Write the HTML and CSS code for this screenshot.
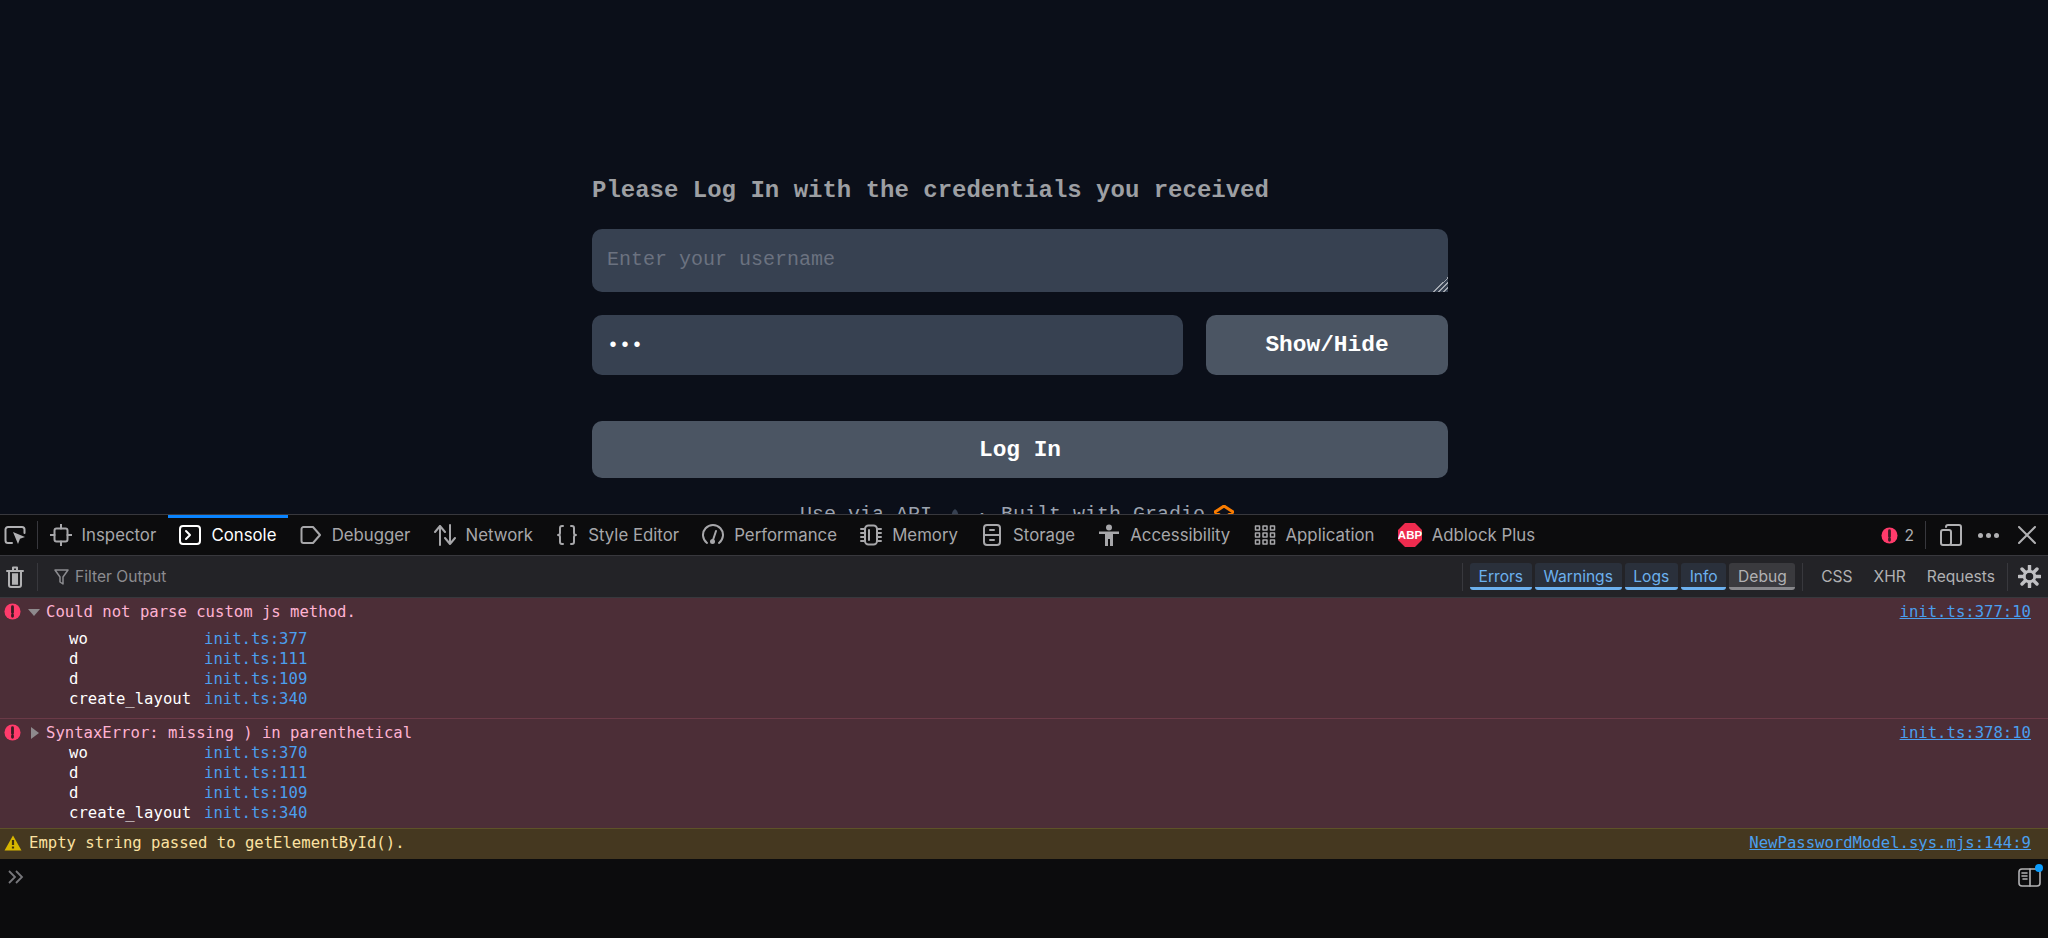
FILE: index.html
```html
<!DOCTYPE html>
<html lang="en">
<head>
<meta charset="utf-8">
<title>Log In</title>
<link rel="stylesheet" href="styles.css">
</head>
<body>
<main class="page">
  <form class="login">
    <h2 class="login-title">Please Log In with the credentials you received</h2>
    <textarea class="username" placeholder="Enter your username"></textarea>
    <div class="pass-row">
      <input class="password" type="password" value="abc">
      <button class="btn toggle" type="button">Show/Hide</button>
    </div>
    <button class="btn submit" type="button">Log In</button>
    <footer class="foot">
      <span>Use via API</span>
      <svg class="rocket" viewBox="0 0 12 12"><path d="M6 0c3 2 4 5 3 12H3C2 5 3 2 6 0z"/></svg>
      <span class="foot-dot">·</span>
      <span>Built with Gradio</span>
      <svg class="gradio" viewBox="0 0 20 20"><path d="M10 1l9 6-9 6-9-6z" fill="none" stroke="#f97c00" stroke-width="3"/></svg>
    </footer>
  </form>
</main>
<section class="devtools">
  <nav class="tabs">
    <button class="pick"><svg class="ic" viewBox="0 0 22 22"><path d="M8 19H4a2.500 2.500 0 0 1-2.500-2.500v-11A2.500 2.500 0 0 1 4 3h14a2.500 2.500 0 0 1 2.500 2.500V9"/><path class="fill" d="M9 8l12 5-5 1.800L14 20z"/></svg></button>
    <span class="sep"></span>
    <a class="tab"><svg class="ic" viewBox="0 0 22 22"><rect x="4.500" y="4.500" width="13" height="13" rx="2"/><path d="M11 0v4.500M11 17.500V22M0 11h4.500M17.500 11H22"/></svg>Inspector</a>
    <a class="tab active"><svg class="ic" viewBox="0 0 22 22"><rect x="1" y="2" width="20" height="18" rx="3"/><path d="M7 7l4 4-4 4"/></svg>Console</a>
    <a class="tab"><svg class="ic" viewBox="0 0 22 22"><path d="M3.500 3h9.500l7 8-7 8H3.500A2 2 0 0 1 1.500 17V5a2 2 0 0 1 2-2z"/></svg>Debugger</a>
    <a class="tab"><svg class="ic" viewBox="0 0 22 22"><path d="M6 21V2M1 8l5-6 5 6M16 1v19M11 14l5 6 5-6"/></svg>Network</a>
    <a class="tab"><svg class="ic" viewBox="0 0 22 22"><path d="M7 2H6a2 2 0 0 0-2 2v5a2 2 0 0 1-2 2 2 2 0 0 1 2 2v5a2 2 0 0 0 2 2h1M15 2h1a2 2 0 0 1 2 2v5a2 2 0 0 0 2 2 2 2 0 0 0-2 2v5a2 2 0 0 1-2 2h-1"/></svg>Style Editor</a>
    <a class="tab"><svg class="ic" viewBox="0 0 22 22"><path d="M5 19A10 10 0 1 1 17 19"/><path d="M14 7l-3 9"/><circle class="fill" cx="10.500" cy="17.500" r="2.500"/></svg>Performance</a>
    <a class="tab"><svg class="ic" viewBox="0 0 22 22"><rect x="5" y="1.500" width="12" height="19" rx="3.500"/><path d="M1 5h4M1 9h4M1 13h4M1 17h4M17 5h4M17 9h4M17 13h4M17 17h4M9 6v10"/></svg>Memory</a>
    <a class="tab"><svg class="ic" viewBox="0 0 22 22"><rect x="3" y="1" width="16" height="20" rx="3"/><path d="M3 11h16M9 6h4M9 16h4"/></svg>Storage</a>
    <a class="tab"><svg class="ic" viewBox="0 0 22 22"><circle class="fill" cx="11" cy="3.500" r="3"/><path class="fill" d="M1 7.500h20v2.500h-6v12h-3v-7h-2v7H7V10H1z"/></svg>Accessibility</a>
    <a class="tab"><svg class="ic thin" viewBox="0 0 22 22"><path d="M1.500 2h4v4h-4zM9 2h4v4H9zM16.500 2h4v4h-4zM1.500 9h4v4h-4zM9 9h4v4H9zM16.500 9h4v4h-4zM1.500 16h4v4h-4zM9 16h4v4H9zM16.500 16h4v4h-4z"/></svg>Application</a>
    <a class="tab"><svg class="ic abp" viewBox="0 0 24 24"><path class="abp-bg" d="M7 0h10l7 7v10l-7 7H7l-7-7V7z"/><text class="abp-text" x="12" y="16">ABP</text></svg>Adblock Plus</a>
    <div class="tabs-end">
      <span class="err-count"><svg class="bang" viewBox="0 0 18 18"><circle class="bang-bg" cx="9" cy="9" r="8.500"/><path class="bang-mark" d="M9 4v6M9 12.500v1.500"/></svg>2</span>
      <span class="sep"></span>
      <svg class="ic side" viewBox="0 0 22 22"><path d="M6 3a2 2 0 0 1 2-2h11a2 2 0 0 1 2 2v16a2 2 0 0 1-2 2h-8"/><rect x="1" y="6" width="10" height="15" rx="2"/></svg>
      <span class="dots"><i></i><i></i><i></i></span>
      <svg class="ic close" viewBox="0 0 18 18"><path d="M1 1l16 16M17 1L1 17"/></svg>
    </div>
  </nav>
  <div class="toolbar">
    <svg class="ic trash" viewBox="0 0 18 22"><path d="M1 5h16M7 4V1.500h4V4M3 5v14a2 2 0 0 0 2 2h8a2 2 0 0 0 2-2V5M7 8v10M9 8v10M11 8v10"/></svg>
    <span class="sep tool-sep"></span>
    <svg class="funnel" viewBox="0 0 15 16"><path d="M1 1h13L9 8v7l-3-2V8z"/></svg>
    <span class="filter">Filter Output</span>
    <div class="tool-end">
      <span class="sep"></span>
      <div class="levels">
        <button class="level">Errors</button>
        <button class="level">Warnings</button>
        <button class="level">Logs</button>
        <button class="level">Info</button>
        <button class="level off">Debug</button>
      </div>
      <span class="sep"></span>
      <div class="kinds"><span>CSS</span><span>XHR</span><span>Requests</span></div>
      <span class="sep"></span>
      <svg class="ic gear" viewBox="0 0 24 24"><circle cx="12" cy="12" r="5.500"/><path class="spokes" d="M12 1v5M12 18v5M1 12h5M18 12h5M4.200 4.200l3.600 3.600M16.200 16.200l3.600 3.600M19.800 4.200l-3.600 3.600M7.800 16.200l-3.600 3.600"/></svg>
    </div>
  </div>
  <div class="log">
    <article class="msg err first">
      <svg class="bang" viewBox="0 0 18 18"><circle class="bang-bg" cx="9" cy="9" r="8.500"/><path class="bang-mark" d="M9 4v6M9 12.500v1.500"/></svg>
      <span class="arrow open"></span>
      <span class="text">Could not parse custom js method.</span>
      <a class="src">init.ts:377:10</a>
      <ul class="stack">
        <li><span>wo</span><a>init.ts:377</a></li>
        <li><span>d</span><a>init.ts:111</a></li>
        <li><span>d</span><a>init.ts:109</a></li>
        <li><span>create_layout</span><a>init.ts:340</a></li>
      </ul>
    </article>
    <article class="msg err second">
      <svg class="bang" viewBox="0 0 18 18"><circle class="bang-bg" cx="9" cy="9" r="8.500"/><path class="bang-mark" d="M9 4v6M9 12.500v1.500"/></svg>
      <span class="arrow shut"></span>
      <span class="text">SyntaxError: missing ) in parenthetical</span>
      <a class="src">init.ts:378:10</a>
      <ul class="stack tight">
        <li><span>wo</span><a>init.ts:370</a></li>
        <li><span>d</span><a>init.ts:111</a></li>
        <li><span>d</span><a>init.ts:109</a></li>
        <li><span>create_layout</span><a>init.ts:340</a></li>
      </ul>
    </article>
    <article class="msg warn">
      <svg class="tri" viewBox="0 0 18 16"><path class="tri-bg" d="M9 .5l8.500 15H.5z"/><path class="tri-mark" d="M9 5v5M9 11.500v2"/></svg>
      <span class="text">Empty string passed to getElementById().</span>
      <a class="src">NewPasswordModel.sys.mjs:144:9</a>
    </article>
    <div class="prompt">
      <svg class="chev" viewBox="0 0 16 14"><path d="M1 1l6 6-6 6M8 1l6 6-6 6"/></svg>
      <span class="side-wrap">
        <svg class="ic book" viewBox="0 0 23 20"><rect x="1" y="2" width="21" height="17" rx="3"/><path d="M12 2v17M4 6h5M4 9h5M5 12h4"/></svg>
        <i class="ping"></i>
      </span>
    </div>
  </div>
</section>
</body>
</html>
```

FILE: styles.css
```css
* { box-sizing: border-box; }
html, body { margin: 0; height: 938px; overflow: hidden; }
body { display: flex; flex-direction: column; background: #0b0f19; font-family: Inter, "Liberation Sans", sans-serif; }

.page { height: 514px; flex: none; overflow: hidden; padding: 176px 0 0 592px; background: #0b0f19; }
.login { width: 856px; display: flex; flex-direction: column; font-family: "Liberation Mono", monospace; }
.login-title { margin: 0 0 23px; font-size: 24px; line-height: 30px; font-weight: 700; color: #9d9fa3; }
.username { display: block; width: 100%; height: 63px; padding: 17px 15px 0; border: 0; border-radius: 10px; background: #374151; color: #fff; font: 20px/28px "Liberation Mono", monospace; outline: 0; resize: vertical; }
.username::placeholder { color: #6b7280; opacity: 1; }
.username::-webkit-resizer { background: linear-gradient(135deg, #374151 50%, transparent 50%), repeating-linear-gradient(135deg, #a3a8b0 0 1px, #374151 1px 3.500px); }
.pass-row { display: flex; gap: 23px; margin-top: 23px; }
.password { flex: 1; min-width: 0; height: 60px; padding: 0 15px; border: 0; border-radius: 10px; background: #374151; color: #fff; font: 20px "Liberation Mono", monospace; outline: 0; }
.btn { border: 0; border-radius: 10px; background: #4b5563; color: #fff; font: 700 22.800px "Liberation Mono", monospace; }
.toggle { width: 242px; height: 60px; }
.submit { margin-top: 46px; height: 57px; }
.foot { display: flex; align-items: center; margin: 23px 0 0 208px; font-size: 20px; line-height: 28px; color: #9ca3af; white-space: nowrap; }
.rocket { width: 12px; height: 18px; margin: 0 15px 0 17px; fill: #374151; flex: none; }
.foot-dot { width: 25px; }
.gradio { width: 20px; height: 20px; margin-left: 9px; }

.devtools { flex: 1; display: flex; flex-direction: column; background: #0c0c0d; color: #b1b1b3; border-top: 1px solid #38383d; min-height: 0; }
.tabs { height: 41px; flex: none; display: flex; align-items: center; border-bottom: 1px solid #38383d; background: #0c0c0d; font-size: 16.800px; }
.ic { width: 22px; height: 22px; flex: none; fill: none; stroke: currentColor; stroke-width: 2; stroke-linecap: round; stroke-linejoin: round; }
.ic .fill { fill: currentColor; stroke: none; }
.ic.thin { stroke-width: 1.500; stroke-linecap: butt; }
.pick { display: flex; width: 37px; padding: 0 0 0 4px; border: 0; background: none; color: inherit; }
.sep { display: block; width: 1px; height: 28px; background: #38383d; flex: none; }
.tab { display: flex; align-items: center; gap: 10px; height: 40px; padding: 0 11.600px; color: #a7a7aa; border-top: 3px solid transparent; border-bottom: 3px solid transparent; white-space: nowrap; }
.tab.active { color: #fff; border-top-color: #0a84ff; }
.abp { width: 24px; height: 24px; }
.abp-bg { fill: #ee2b4e; stroke: none; }
.abp-text { fill: #fff; stroke: none; font: 700 11.500px "Liberation Sans", sans-serif; text-anchor: middle; }
.tabs-end { margin-left: auto; display: flex; align-items: center; font-size: 15.600px; }
.err-count { display: flex; align-items: center; gap: 6px; margin-right: 11px; }
.bang { width: 17px; height: 17px; flex: none; }
.bang-bg { fill: #ff3b6b; }
.bang-mark { stroke: #3a1c24; stroke-width: 3; stroke-linecap: round; fill: none; }
.side { margin: 0 16px 0 14px; }
.dots { display: flex; gap: 3px; margin-right: 19px; }
.dots i { width: 5px; height: 5px; border-radius: 50%; background: #b1b1b3; }
.close { width: 18px; height: 18px; margin-right: 12px; }

.toolbar { height: 42px; flex: none; display: flex; align-items: center; background: #232327; border-bottom: 1px solid #38383d; font-size: 15.600px; }
.trash { width: 18px; margin-left: 6px; }
.tool-sep { margin: 0 16px 0 13px; }
.funnel { width: 15px; height: 16px; fill: none; stroke: #8c8c90; stroke-width: 1.500; stroke-linejoin: round; }
.filter { margin-left: 6px; color: #8c8c90; }
.tool-end { margin-left: auto; display: flex; align-items: center; }
.levels { display: flex; gap: 3px; margin: 0 6.700px 0 7px; }
.level { height: 27px; padding: 3px 8.700px 0; border: 0; border-bottom: 3px solid #6cb0ee; border-radius: 3px; background: #2a303b; color: #6cb0ee; font: 15.600px/20px Inter, sans-serif; }
.level.off { background: #3a3a3e; color: #b1b1b3; border-bottom-color: #87878b; }
.kinds { display: flex; gap: 21px; margin: 0 12px 0 18px; color: #b1b1b3; }
.gear { margin: 0 7px 0 10px; width: 23px; height: 23px; stroke-width: 3; color: #c0c0c3; }
.gear .spokes { stroke-width: 3.600; }

.log { flex: 1; display: flex; flex-direction: column; font: 15.600px/20px "DejaVu Sans Mono", monospace; min-height: 0; }
.msg { position: relative; padding-left: 46px; flex: none; }
.msg .bang, .msg .tri { position: absolute; left: 4px; top: 5px; }
.err { background: #4c2e37; color: #ffb3d2; border-bottom: 1px solid #6b3a47; }
.first { padding-top: 4px; height: 121px; }
.second { padding-top: 4px; height: 109px; border-bottom: 0; }
.warn { height: 31px; padding-top: 4px; padding-left: 29px; background: #453820; color: #fce2a1; border-top: 1px solid #5e5228; }
.warn .tri { top: 6px; width: 18px; height: 16px; }
.tri-bg { fill: #d7b600; }
.tri-mark { stroke: #40310c; stroke-width: 2.200; fill: none; }
.arrow { position: absolute; width: 0; height: 0; }
.arrow.open { left: 28px; top: 11px; border: 6px solid transparent; border-top: 7px solid #8e8a8d; border-bottom: 0; }
.arrow.shut { left: 31px; top: 8px; border: 6px solid transparent; border-left: 8px solid #8e8a8d; border-right: 0; }
.src { position: absolute; right: 17px; top: 4px; color: #4b9fee; text-decoration: underline; }
.stack { list-style: none; margin: 7px 0 0 23px; padding: 0; color: #fff; }
.stack.tight { margin-top: 0; }
.stack li { display: flex; }
.stack span { width: 135px; }
.stack a { color: #4b9fee; }
.prompt { flex: 1; display: flex; justify-content: space-between; align-items: flex-start; padding: 11px 7px 0 8px; background: #0c0c0d; }
.chev { width: 16px; height: 14px; fill: none; stroke: #77777b; stroke-width: 1.800; }
.side-wrap { position: relative; display: block; width: 23px; height: 20px; margin-top: -3px; color: #b1b1b3; }
.book { display: block; width: 23px; height: 20px; stroke-width: 1.600; }
.ping { position: absolute; right: -2px; top: -3px; width: 8px; height: 8px; border-radius: 50%; background: #0a9dff; }
```
